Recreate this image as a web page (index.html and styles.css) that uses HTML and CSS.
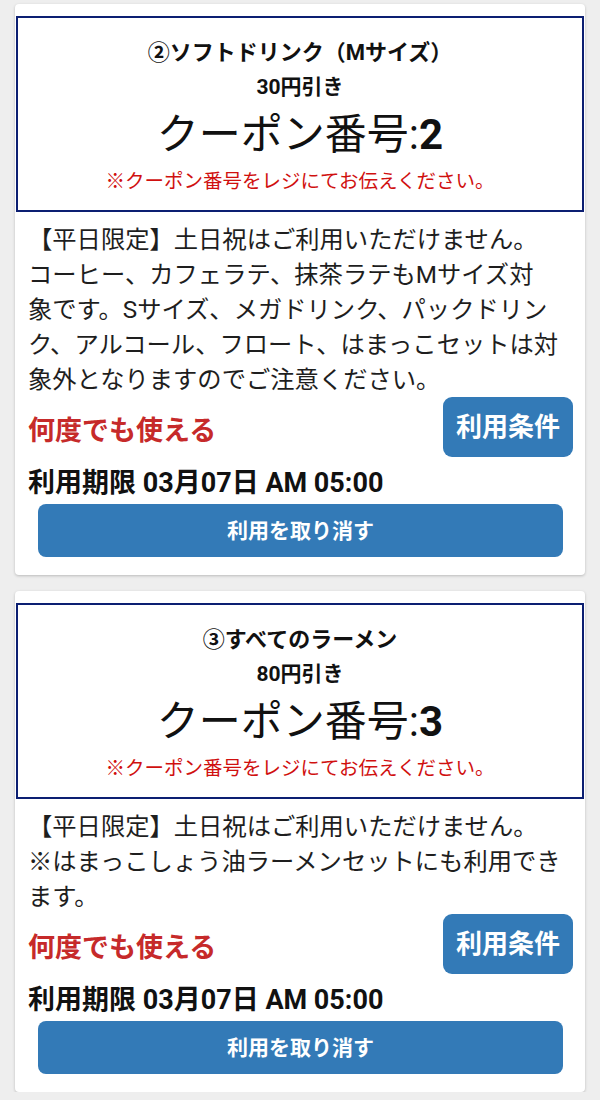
FILE: index.html
```html
<!DOCTYPE html>
<html lang="ja">
<head>
<meta charset="utf-8">
<title>クーポン</title>
<link rel="stylesheet" href="styles.css">
</head>
<body>
<div class="list">
  <section class="card">
    <div class="coupon-head">
      <div class="coupon-title">②ソフトドリンク（Mサイズ）</div>
      <div class="coupon-price">30円引き</div>
      <div class="coupon-no">クーポン番号:<b>2</b></div>
      <div class="coupon-note">※クーポン番号をレジにてお伝えください。</div>
    </div>
    <div class="card-body">
      <p class="desc">【平日限定】土日祝はご利用いただけません。<br>コーヒー、カフェラテ、抹茶ラテもMサイズ対<br>象です。Sサイズ、メガドリンク、パックドリン<br>ク、アルコール、フロート、はまっこセットは対<br>象外となりますのでご注意ください。</p>
      <div class="use-row">
        <span class="unlimited">何度でも使える</span>
        <button class="btn btn-terms">利用条件</button>
      </div>
      <div class="expire">利用期限 03月07日 AM 05:00</div>
      <button class="btn btn-cancel">利用を取り消す</button>
    </div>
  </section>

  <section class="card">
    <div class="coupon-head">
      <div class="coupon-title">③すべてのラーメン</div>
      <div class="coupon-price">80円引き</div>
      <div class="coupon-no">クーポン番号:<b>3</b></div>
      <div class="coupon-note">※クーポン番号をレジにてお伝えください。</div>
    </div>
    <div class="card-body">
      <p class="desc">【平日限定】土日祝はご利用いただけません。<br>※はまっこしょう油ラーメンセットにも利用でき<br>ます。</p>
      <div class="use-row">
        <span class="unlimited">何度でも使える</span>
        <button class="btn btn-terms">利用条件</button>
      </div>
      <div class="expire">利用期限 03月07日 AM 05:00</div>
      <button class="btn btn-cancel">利用を取り消す</button>
    </div>
  </section>
</div>
</body>
</html>
```

FILE: styles.css
```css
* { box-sizing: border-box; }

html, body {
  margin: 0;
  padding: 0;
  background: #eeeeee;
}

body {
  font-family: Roboto, "Noto Sans CJK JP", sans-serif;
  color: #1a1a1a;
}

.list {
  display: flex;
  flex-direction: column;
  gap: 16px;
  padding: 4px 15px 0 15px;
}

.card {
  background: #ffffff;
  border-radius: 4px;
  box-shadow: 0 1px 3px rgba(0, 0, 0, 0.22);
  padding: 12px 1px 18px 1px;
}

.coupon-head {
  border: 2px solid #0c1f72;
  padding: 21px 0 14px;
  text-align: center;
  color: #111111;
}

.coupon-title {
  font-size: 22px;
  font-weight: 700;
  line-height: 28px;
}

.coupon-price {
  margin-top: 6px;
  font-size: 21px;
  font-weight: 700;
  line-height: 28px;
}

.coupon-no {
  margin-top: 8px;
  font-size: 42px;
  line-height: 52px;
  font-weight: 400;
}

.coupon-no b {
  font-weight: 700;
}

.coupon-note {
  margin-top: 7px;
  font-size: 19.5px;
  line-height: 28px;
  color: #d0100f;
}

.card-body {
  padding: 10px 11px 0 12px;
}

.desc {
  margin: 0;
  font-size: 24.3px;
  line-height: 35px;
  color: #1e1e1e;
  white-space: nowrap;
}

.use-row {
  display: flex;
  justify-content: space-between;
  align-items: center;
}

.unlimited {
  padding-top: 8px;
  font-size: 27px;
  line-height: 36px;
  font-weight: 700;
  color: #c62a2a;
}

.btn {
  font-family: Roboto, "Noto Sans CJK JP", sans-serif;
  border: none;
  background: #337ab7;
  color: #ffffff;
  font-weight: 700;
  cursor: pointer;
}

.btn-terms {
  height: 60px;
  padding: 0 13px;
  font-size: 26px;
  line-height: 36px;
  border-radius: 9px;
}

.expire {
  margin-top: 11px;
  font-size: 27px;
  line-height: 30px;
  font-weight: 700;
  color: #111111;
}

.btn-cancel {
  display: block;
  width: calc(100% - 20px);
  margin: 6px 10px 0 10px;
  height: 53px;
  font-size: 21px;
  line-height: 30px;
  border-radius: 8px;
}
```
